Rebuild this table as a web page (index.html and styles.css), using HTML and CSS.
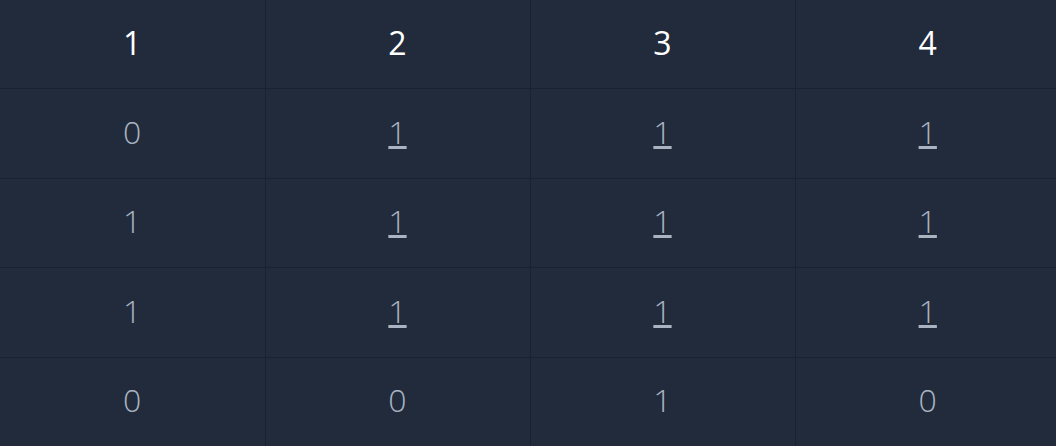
FILE: index.html
```html
<!DOCTYPE html>
<html lang="en">
<head>
    <meta charset="UTF-8">
    <meta name="viewport" content="width=device-width, initial-scale=1.0">
    <title>Matrix</title>
    <link rel="stylesheet" href="styles.css">
</head>
<body>
    <table class="matrix">
        <thead>
            <tr>
                <th>1</th>
                <th>2</th>
                <th>3</th>
                <th>4</th>
            </tr>
        </thead>
        <tbody>
            <tr>
                <td>0</td>
                <td><a href="#">1</a></td>
                <td><a href="#">1</a></td>
                <td><a href="#">1</a></td>
            </tr>
            <tr>
                <td>1</td>
                <td><a href="#">1</a></td>
                <td><a href="#">1</a></td>
                <td><a href="#">1</a></td>
            </tr>
            <tr>
                <td>1</td>
                <td><a href="#">1</a></td>
                <td><a href="#">1</a></td>
                <td><a href="#">1</a></td>
            </tr>
            <tr>
                <td>0</td>
                <td>0</td>
                <td>1</td>
                <td>0</td>
            </tr>
        </tbody>
    </table>
</body>
</html>
```

FILE: styles.css
```css
html, body {
    margin: 0;
    padding: 0;
    background-color: #222b3c;
    overflow: hidden;
}

body {
    font-family: "Open Sans", sans-serif;
}

.matrix {
    width: 1060px;
    height: 446px;
    border-collapse: collapse;
    table-layout: fixed;
}

.matrix th,
.matrix td {
    height: 84px;
    border: 1px solid #1a2130;
    text-align: center;
    font-size: 32px;
    padding: 0 0 4px;
}

.matrix tr:first-child th {
    border-top: none;
}

.matrix tr:last-child td {
    border-bottom: none;
}

.matrix th:first-child,
.matrix td:first-child {
    border-left: none;
}

.matrix th:last-child,
.matrix td:last-child {
    border-right: none;
}

.matrix th {
    color: #fff;
    font-weight: 400;
}

.matrix td {
    color: #a9b3c1;
    font-weight: 300;
}

.matrix td a {
    color: inherit;
    text-decoration: underline;
}
```
